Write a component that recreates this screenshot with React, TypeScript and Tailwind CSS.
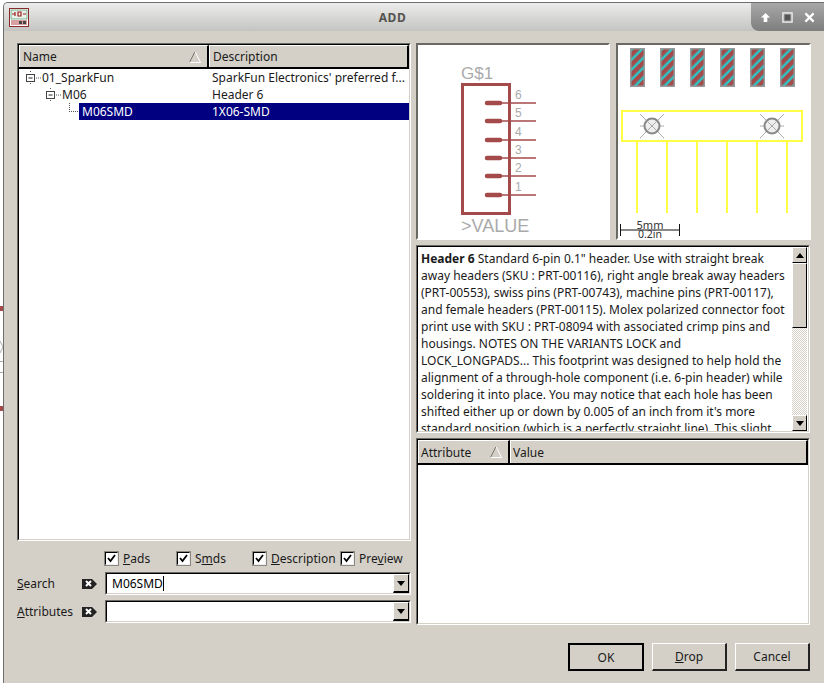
import type { ReactNode } from "react"

const descLines = [
  "Standard 6-pin 0.1\" header. Use with straight break",
  "away headers (SKU : PRT-00116), right angle break away headers",
  "(PRT-00553), swiss pins (PRT-00743), machine pins (PRT-00117),",
  "and female headers (PRT-00115). Molex polarized connector foot",
  "print use with SKU : PRT-08094 with associated crimp pins and",
  "housings. NOTES ON THE VARIANTS LOCK and",
  "LOCK_LONGPADS... This footprint was designed to help hold the",
  "alignment of a through-hole component (i.e. 6-pin header) while",
  "soldering it into place. You may notice that each hole has been",
  "shifted either up or down by 0.005 of an inch from it's more",
  "standard position (which is a perfectly straight line). This slight",
]

const pinYs = [103, 121, 140, 158, 176, 195]
const pinLabels = ["6", "5", "4", "3", "2", "1"]
const padXs = [630, 660, 690, 720, 750, 780]

function Sunken({ className, children, soft }: { className: string; children: ReactNode; soft?: boolean }) {
  return (
    <div className={`border border-t-[#6a6963] border-l-[#6a6963] border-r-white border-b-white ${className}`}>
      <div className={`h-full w-full border ${soft ? "border-t-[#6a6963] border-l-[#6a6963] border-r-white border-b-white" : "border-t-black border-l-black border-r-[#d4d0c8] border-b-[#d4d0c8]"} bg-white overflow-hidden relative`}>
        {children}
      </div>
    </div>
  )
}

function SortArrow() {
  return (
    <svg width="14" height="14" viewBox="0 0 14 14" className="shrink-0">
      <path d="M7 1.5 L1.5 12.5" stroke="#77746c" fill="none" />
      <path d="M7 1.5 L12.5 12.5 L1.5 12.5" stroke="#fff" fill="none" />
    </svg>
  )
}

function HeaderCell({ className, children }: { className: string; children: ReactNode }) {
  return (
    <div className={`h-full flex items-center justify-between pr-[5px] bg-[#d4d0c8] border-t border-l border-t-white border-l-white border-r-2 border-r-black ${className}`}>
      {children}
    </div>
  )
}

function MinusBox() {
  return (
    <svg width="16" height="14" viewBox="0 0 16 14" className="shrink-0">
      <path d="M5.5 0v2M5.5 12v2M11 7h5" stroke="#555" strokeDasharray="1 1" fill="none" />
      <rect x="1.5" y="3.5" width="8" height="7" fill="#fff" stroke="#444" />
      <path d="M3.5 7h4" stroke="#222" />
    </svg>
  )
}

function Check({ label }: { label: ReactNode }) {
  return (
    <div className="flex items-center gap-[5px]">
      <div className="w-[13px] h-[13px] bg-white border border-t-black border-l-black border-r-[#eee] border-b-[#eee] shadow-[0_0_0_1px_#8a8880] flex items-center justify-center">
        <svg width="9" height="9" viewBox="0 0 9 9">
          <path d="M1 4 L3.5 7 L8 1" stroke="#000" strokeWidth="1.8" fill="none" />
        </svg>
      </div>
      <span>{label}</span>
    </div>
  )
}

function TagIcon() {
  return (
    <svg width="16" height="12" viewBox="0 0 16 12" className="shrink-0">
      <path d="M0 1h10l5 5-5 5H0z" fill="#222" />
      <path d="M4 3l5 5M9 3l-5 5" stroke="#fff" strokeWidth="2" />
    </svg>
  )
}

function Combo({ value }: { value?: string }) {
  return (
    <Sunken className="w-[306px] h-[23px]">
      <div className="h-full flex items-center justify-between">
        <div className="flex items-center pl-[5px] text-black">
          {value}
          {value && <span className="w-px h-[15px] bg-black" />}
        </div>
        <div className="w-[16px] h-full bg-[#d4d0c8] border-t border-l border-t-white border-l-white border-r border-b-2 border-r-black border-b-black flex items-center justify-center">
          <svg width="8" height="5" viewBox="0 0 8 5"><path d="M0 0h8L4 5z" fill="#000" /></svg>
        </div>
      </div>
    </Sunken>
  )
}

function SmallButton({ dir }: { dir: "up" | "down" }) {
  return (
    <div className="h-[16px] bg-[#d4d0c8] border border-t-white border-l-white border-r-black border-b-black flex items-center justify-center">
      <svg width="8" height="5" viewBox="0 0 8 5">
        <path d={dir === "up" ? "M0 5h8L4 0z" : "M0 0h8L4 5z"} fill="#000" />
      </svg>
    </div>
  )
}

function Button({ children, isDefault }: { children: ReactNode; isDefault?: boolean }) {
  return (
    <div className={`h-[28px] flex items-center justify-center bg-[#d4d0c8] ${isDefault ? "w-[76px] border-2 border-black" : "w-[75px] border border-t-white border-l-white border-r-2 border-b-2 border-r-[#222] border-b-[#222]"}`}>
      <span>{children}</span>
    </div>
  )
}

function SchematicPreview() {
  return (
    <svg viewBox="418 45 190 193" className="w-full h-full">
      <text x="461" y="79" fontSize="17" fill="#aaa" fontFamily="Liberation Sans, sans-serif">G$1</text>
      <rect x="462.5" y="84.5" width="47" height="129" fill="none" stroke="#a54a4a" strokeWidth="3" />
      {pinYs.map((y, i) => (
        <g key={y}>
          <line x1="487" x2="500" y1={y} y2={y} stroke="#a54a4a" strokeWidth="4.5" strokeLinecap="round" />
          <line x1="500" x2="536" y1={y} y2={y} stroke="#a54a4a" strokeWidth="1.5" />
          <text x="515" y={y - 4} fontSize="12" fill="#aaa" fontFamily="Liberation Sans, sans-serif">{pinLabels[i]}</text>
        </g>
      ))}
      <text x="461" y="232" fontSize="18" fill="#aaa" fontFamily="Liberation Sans, sans-serif">&gt;VALUE</text>
    </svg>
  )
}

function Hole({ cx }: { cx: number }) {
  return (
    <g>
      <path d={`M${cx - 12} 114l24 24M${cx + 12} 114l-24 24M${cx - 12} 126h24`} stroke="#999" strokeWidth="0.8" fill="none" />
      <circle cx={cx} cy="126" r="7.5" fill="#eee" stroke="#888" strokeWidth="2" />
      <path d={`M${cx - 5} 121l10 10M${cx + 5} 121l-10 10`} stroke="#aaa" strokeWidth="1" />
    </g>
  )
}

function FootprintPreview() {
  return (
    <svg viewBox="618 45 191 193" className="w-full h-full">
      <defs>
        <pattern id="hatch" width="7" height="7" patternUnits="userSpaceOnUse" patternTransform="rotate(-45)">
          <rect width="7" height="7" fill="#2cc4c4" />
          <rect width="7" height="4.5" fill="#a54a4a" />
        </pattern>
      </defs>
      {padXs.map((x) => (
        <g key={x}>
          <rect x={x + 0.75} y="48.75" width="13.5" height="37.5" fill="url(#hatch)" stroke="#999" strokeWidth="1.5" />
          <line x1={x + 7} x2={x + 7} y1="141" y2="213" stroke="#ffff44" strokeWidth="2" />
        </g>
      ))}
      <rect x="622" y="111" width="180" height="30" fill="none" stroke="#ffff44" strokeWidth="2" />
      <Hole cx={652} />
      <Hole cx={772} />
      <path d="M620.5 224v12M679.5 224v12M620.5 230h59" stroke="#111" strokeWidth="1" fill="none" />
      <text x="650" y="228.5" textAnchor="middle" fontSize="11" fill="#333" fontFamily="Noto Sans, sans-serif">5mm</text>
      <text x="650" y="238" textAnchor="middle" fontSize="10.5" fill="#333" fontFamily="Noto Sans, sans-serif">0.2in</text>
    </svg>
  )
}

export default function App() {
  return (
    <div className="w-[824px] h-[683px] bg-white overflow-hidden flex pt-[2px] text-[12px] leading-[17px] text-[#1a1a1a] font-['Noto_Sans',sans-serif]">
      {/* strip of the window behind */}
      <div className="w-[3px] relative">
        <div className="absolute left-0 top-[304px] w-[3px] h-[5px] bg-[#a54a4a]" />
        <div className="absolute left-0 top-[404px] w-[3px] h-[5px] bg-[#a54a4a]" />
        <div className="absolute left-0 top-[359px] w-[3px] h-px bg-[#aaa]" />
        <div className="absolute left-0 top-[370px] w-[3px] h-px bg-[#aaa]" />
        <svg width="3" height="12" viewBox="0 0 3 12" className="absolute left-0 top-[339px]">
          <path d="M0 0l3 6-3 6" stroke="#aaa" fill="none" />
        </svg>
      </div>

      <div className="flex-1 flex flex-col border-l border-t border-[#6e6e6e] rounded-tl-[5px] bg-[#d4d0c8] overflow-hidden">
        {/* title bar */}
        <div className="h-[28px] shrink-0 flex items-center justify-between bg-gradient-to-b from-[#ececec] to-[#c4c4c2]">
          <div className="ml-[5px]">
            <svg width="20" height="19" viewBox="0 0 20 19">
              <rect x="0.5" y="0.5" width="19" height="18" fill="#fff" stroke="#8a2a2a" />
              <rect x="2" y="2" width="16" height="9" fill="#e8f0e8" stroke="#2a8a5a" strokeWidth="0.6" />
              <path d="M3 6h3M6 4v4M9 4h3v4H9zM14 6h3" stroke="#a02020" strokeWidth="1.2" fill="none" />
              <rect x="2" y="12" width="16" height="5" fill="#d8a0a0" />
              <rect x="10" y="13" width="3" height="3" fill="#444" />
              <rect x="14" y="13" width="3" height="3" fill="#444" />
            </svg>
          </div>
          <div className="font-bold text-[#55534f] tracking-[0.5px] ml-[5px]">ADD</div>
          <div className="w-[73px] h-full flex items-center justify-around px-[3px] rounded-bl-[8px] bg-gradient-to-b from-[#a8a8a8] to-[#7e7e7e]">
            <svg width="11" height="11" viewBox="0 0 12 12"><path d="M6 1L1 6h3v5h4V6h3z" fill="#fff" /></svg>
            <svg width="11" height="11" viewBox="0 0 12 12"><rect x="1" y="1" width="10" height="10" fill="none" stroke="#eee" strokeWidth="1.5" /><rect x="3" y="3" width="6" height="6" fill="#555" /></svg>
            <svg width="11" height="11" viewBox="0 0 12 12"><path d="M1.5 1.5l9 9M10.5 1.5l-9 9" stroke="#fff" strokeWidth="2.4" /></svg>
          </div>
        </div>

        {/* body */}
        <div className="flex-1 flex flex-col pl-[13px] pt-[12px]">
          <div className="flex gap-[5px]">
            {/* left column */}
            <div className="w-[394px] shrink-0 flex flex-col">
              <Sunken className="h-[498px]">
                <div className="h-[24px] flex border-b-2 border-b-black">
                  <HeaderCell className="w-[190px] pl-[3px]"><span>Name</span><SortArrow /></HeaderCell>
                  <HeaderCell className="flex-1 pl-[3px]"><span>Description</span></HeaderCell>
                </div>
                <div className="flex h-[17px] items-center">
                  <div className="w-[192px] flex items-center pl-[6px] gap-[1px]"><MinusBox /><span>01_SparkFun</span></div>
                  <span className="pl-[1px] whitespace-nowrap">SparkFun Electronics' preferred f...</span>
                </div>
                <div className="flex h-[17px] items-center">
                  <div className="w-[192px] flex items-center pl-[26px] gap-[1px]"><MinusBox /><span>M06</span></div>
                  <span className="pl-[1px]">Header 6</span>
                </div>
                <div className="flex h-[17px] items-center">
                  <svg width="60" height="17" viewBox="0 0 60 17" className="shrink-0">
                    <path d="M50.5 0v8M50 8.5h10" stroke="#555" strokeDasharray="1 1" fill="none" />
                  </svg>
                  <div className="flex-1 h-full flex items-center bg-[#000080] text-white">
                    <span className="w-[133px] pl-[3px]">M06SMD</span>
                    <span>1X06-SMD</span>
                  </div>
                </div>
              </Sunken>

              <div className="mt-[9px] ml-[88px] h-[17px] flex items-center">
                <div className="w-[72px]"><Check label={<><u>P</u>ads</>} /></div>
                <div className="w-[76px]"><Check label={<>S<u>m</u>ds</>} /></div>
                <div className="w-[88px]"><Check label={<><u>D</u>escription</>} /></div>
                <Check label={<>Pre<u>v</u>iew</>} />
              </div>

              <div className="mt-[5px] flex items-center">
                <span className="w-[65px]"><u>S</u>earch</span>
                <div className="w-[23px]"><TagIcon /></div>
                <Combo value="M06SMD" />
              </div>
              <div className="mt-[5px] flex items-center">
                <span className="w-[65px]"><u>A</u>ttributes</span>
                <div className="w-[23px]"><TagIcon /></div>
                <Combo />
              </div>
            </div>

            {/* right column */}
            <div className="w-[395px] shrink-0 flex flex-col">
              <div className="flex gap-[6px] h-[197px]">
                <Sunken soft className="w-[194px] h-full"><SchematicPreview /></Sunken>
                <Sunken soft className="w-[195px] h-full"><FootprintPreview /></Sunken>
              </div>

              <Sunken className="mt-[5px] h-[188px] w-[394px]">
                <div className="flex h-full">
                  <div className="flex-1 pl-[3px] pt-[3px] overflow-hidden whitespace-nowrap">
                    {descLines.map((line, i) => (
                      <div key={i}>
                        {i === 0 && <b>Header 6 </b>}
                        {line}
                      </div>
                    ))}
                  </div>
                  <div className="w-[15px] mr-[1px] flex flex-col bg-[repeating-conic-gradient(#d4d0c8_0_25%,#fff_0_50%)] bg-[length:2px_2px]">
                    <SmallButton dir="up" />
                    <div className="h-[65px] bg-[#d4d0c8] border border-t-white border-l-white border-r-black border-b-black" />
                    <div className="flex-1" />
                    <SmallButton dir="down" />
                  </div>
                </div>
              </Sunken>

              <Sunken className="mt-[5px] h-[187px] w-[394px]">
                <div className="h-[25px] flex border-b-2 border-b-black">
                  <HeaderCell className="w-[92px] pl-[2px]"><span>Attribute</span><SortArrow /></HeaderCell>
                  <HeaderCell className="flex-1 pl-[2px]"><span>Value</span></HeaderCell>
                </div>
              </Sunken>
            </div>
          </div>

          {/* buttons */}
          <div className="mt-[18px] ml-[551px] flex gap-[8px]">
            <Button isDefault>OK</Button>
            <Button><u>D</u>rop</Button>
            <Button>Cancel</Button>
          </div>
        </div>
      </div>
    </div>
  )
}
